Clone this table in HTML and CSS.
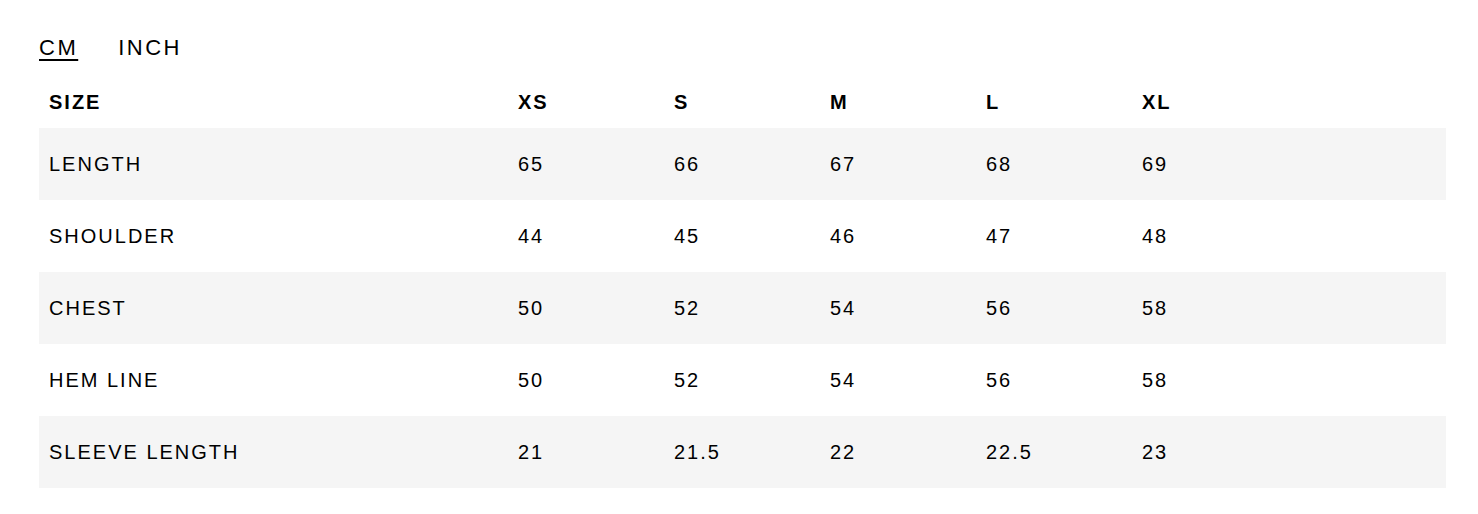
FILE: index.html
```html
<!DOCTYPE html>
<html>
<head>
<meta charset="utf-8">
<link rel="stylesheet" href="styles.css">
</head>
<body>
<div class="wrap">
  <div class="tabs">
    <span class="tab active">CM</span>
    <span class="tab">INCH</span>
  </div>
  <div class="table">
    <div class="row head">
      <div class="cell">SIZE</div><div class="cell">XS</div><div class="cell">S</div><div class="cell">M</div><div class="cell">L</div><div class="cell">XL</div>
    </div>
    <div class="row shade">
      <div class="cell">LENGTH</div><div class="cell">65</div><div class="cell">66</div><div class="cell">67</div><div class="cell">68</div><div class="cell">69</div>
    </div>
    <div class="row">
      <div class="cell">SHOULDER</div><div class="cell">44</div><div class="cell">45</div><div class="cell">46</div><div class="cell">47</div><div class="cell">48</div>
    </div>
    <div class="row shade">
      <div class="cell">CHEST</div><div class="cell">50</div><div class="cell">52</div><div class="cell">54</div><div class="cell">56</div><div class="cell">58</div>
    </div>
    <div class="row">
      <div class="cell">HEM LINE</div><div class="cell">50</div><div class="cell">52</div><div class="cell">54</div><div class="cell">56</div><div class="cell">58</div>
    </div>
    <div class="row shade">
      <div class="cell">SLEEVE LENGTH</div><div class="cell">21</div><div class="cell">21.5</div><div class="cell">22</div><div class="cell">22.5</div><div class="cell">23</div>
    </div>
  </div>
</div>
</body>
</html>
```
FILE: styles.css
```css
html, body {
  margin: 0;
  padding: 0;
  background: #fff;
}
body {
  font-family: "Liberation Sans", Arial, sans-serif;
  color: #000;
}
.wrap {
  width: 1407px;
  padding-left: 39px;
}
.tabs {
  display: flex;
  gap: 40px;
  padding-top: 35px;
  height: 76px;
  box-sizing: border-box;
}
.tab {
  font-size: 22px;
  line-height: 25px;
  height: 25px;
  letter-spacing: 2.5px;
}
.tab.active {
  text-decoration: underline;
  text-underline-offset: 4px;
  text-decoration-thickness: 2px;
}
.table {
  display: flex;
  flex-direction: column;
}
.row {
  display: grid;
  grid-template-columns: 469px 156px 156px 156px 156px 1fr;
  height: 72px;
  align-items: center;
}
.row.head {
  height: 52px;
  font-weight: bold;
}
.row.shade {
  background: #f5f5f5;
}
.cell {
  padding-left: 10px;
  font-size: 20px;
  line-height: 24px;
  letter-spacing: 2px;
}
```
